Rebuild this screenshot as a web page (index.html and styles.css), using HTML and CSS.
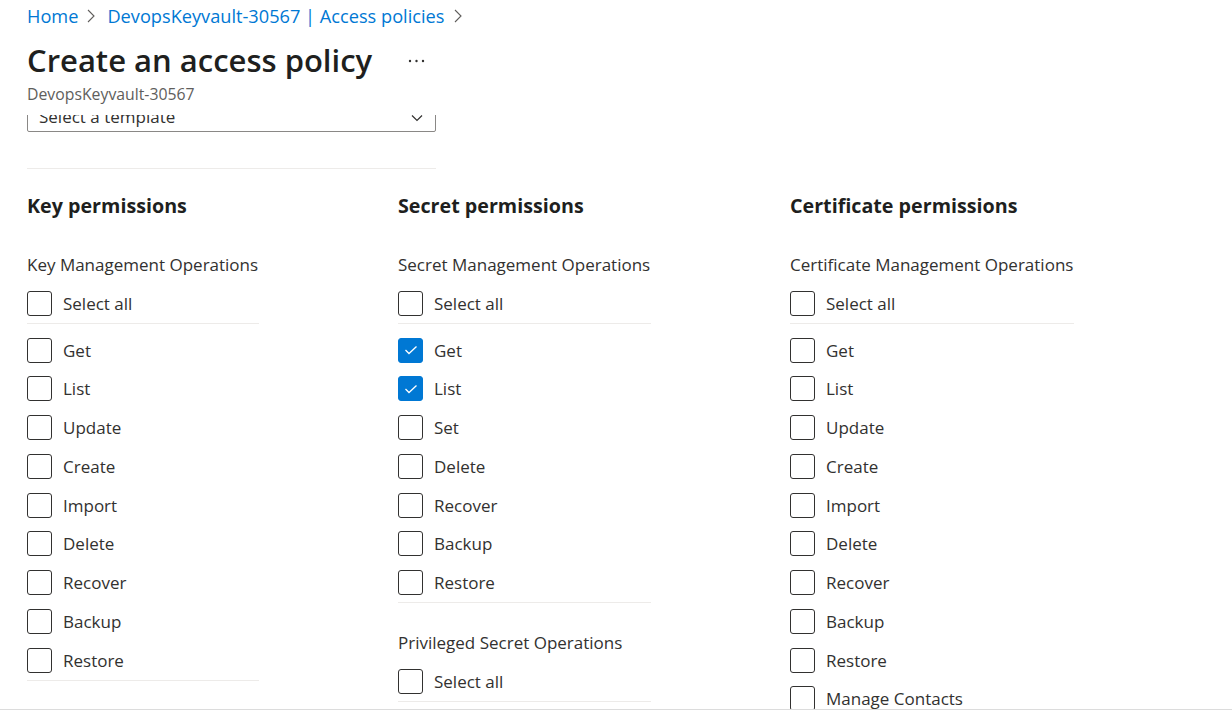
FILE: index.html
```html
<!DOCTYPE html>
<html lang="en">
<head>
<meta charset="utf-8">
<title>Create an access policy</title>
<link rel="stylesheet" href="styles.css">
</head>
<body>
<div class="page">
  <header class="header">
    <nav class="breadcrumb">
      <a class="crumb">Home</a>
      <svg class="chev" width="10" height="14" viewBox="0 0 10 14"><polyline points="2,1 8,7 2,13" fill="none" stroke="#605e5c" stroke-width="1.1"/></svg>
      <a class="crumb">DevopsKeyvault-30567 | Access policies</a>
      <svg class="chev last" width="10" height="14" viewBox="0 0 10 14"><polyline points="2,1 8,7 2,13" fill="none" stroke="#605e5c" stroke-width="1.1"/></svg>
    </nav>
    <div class="title-row">
      <h1 class="title">Create an access policy</h1>
      <svg class="more" width="18" height="4" viewBox="0 0 18 4"><circle cx="2" cy="2" r="1.2" fill="#323130"/><circle cx="8.5" cy="2" r="1.2" fill="#323130"/><circle cx="15" cy="2" r="1.2" fill="#323130"/></svg>
    </div>
    <div class="subtitle">DevopsKeyvault-30567</div>
  </header>

  <main class="scroll">
    <div class="content">
      <div class="select">
        <span class="select-text">Select a template</span>
        <svg class="select-chev" width="12" height="8" viewBox="0 0 12 8"><polyline points="1,1.5 6,6.5 11,1.5" fill="none" stroke="#323130" stroke-width="1.2"/></svg>
      </div>
      <div class="divider"></div>

      <div class="columns">
        <section class="col">
          <h2 class="col-title">Key permissions</h2>
          <div class="group">
            <div class="group-label">Key Management Operations</div>
            <label class="row all"><span class="box"></span><span>Select all</span></label>
            <div class="items">
              <label class="row"><span class="box"></span><span>Get</span></label>
              <label class="row"><span class="box"></span><span>List</span></label>
              <label class="row"><span class="box"></span><span>Update</span></label>
              <label class="row"><span class="box"></span><span>Create</span></label>
              <label class="row"><span class="box"></span><span>Import</span></label>
              <label class="row"><span class="box"></span><span>Delete</span></label>
              <label class="row"><span class="box"></span><span>Recover</span></label>
              <label class="row"><span class="box"></span><span>Backup</span></label>
              <label class="row"><span class="box"></span><span>Restore</span></label>
            </div>
          </div>
        </section>

        <section class="col">
          <h2 class="col-title">Secret permissions</h2>
          <div class="group">
            <div class="group-label">Secret Management Operations</div>
            <label class="row all"><span class="box"></span><span>Select all</span></label>
            <div class="items">
              <label class="row"><span class="box checked"><svg width="14" height="10" viewBox="0 0 14 10"><polyline points="1.5,5 5,8.5 12.5,1.5" fill="none" stroke="#fff" stroke-width="1.3"/></svg></span><span>Get</span></label>
              <label class="row"><span class="box checked"><svg width="14" height="10" viewBox="0 0 14 10"><polyline points="1.5,5 5,8.5 12.5,1.5" fill="none" stroke="#fff" stroke-width="1.3"/></svg></span><span>List</span></label>
              <label class="row"><span class="box"></span><span>Set</span></label>
              <label class="row"><span class="box"></span><span>Delete</span></label>
              <label class="row"><span class="box"></span><span>Recover</span></label>
              <label class="row"><span class="box"></span><span>Backup</span></label>
              <label class="row"><span class="box"></span><span>Restore</span></label>
            </div>
          </div>
          <div class="group">
            <div class="group-label">Privileged Secret Operations</div>
            <label class="row all"><span class="box"></span><span>Select all</span></label>
          </div>
        </section>

        <section class="col">
          <h2 class="col-title">Certificate permissions</h2>
          <div class="group">
            <div class="group-label">Certificate Management Operations</div>
            <label class="row all"><span class="box"></span><span>Select all</span></label>
            <div class="items">
              <label class="row"><span class="box"></span><span>Get</span></label>
              <label class="row"><span class="box"></span><span>List</span></label>
              <label class="row"><span class="box"></span><span>Update</span></label>
              <label class="row"><span class="box"></span><span>Create</span></label>
              <label class="row"><span class="box"></span><span>Import</span></label>
              <label class="row"><span class="box"></span><span>Delete</span></label>
              <label class="row"><span class="box"></span><span>Recover</span></label>
              <label class="row"><span class="box"></span><span>Backup</span></label>
              <label class="row"><span class="box"></span><span>Restore</span></label>
              <label class="row"><span class="box"></span><span>Manage Contacts</span></label>
            </div>
          </div>
        </section>
      </div>
    </div>
  </main>
</div>
</body>
</html>
```

FILE: styles.css
```css
* { box-sizing: border-box; }

html, body {
  margin: 0;
  padding: 0;
  background: #ffffff;
}

body {
  font-family: "Segoe UI", "Open Sans", "Noto Sans", sans-serif;
  color: #323130;
  overflow: hidden;
}

.page {
  width: 1232px;
  height: 721px;
  display: flex;
  flex-direction: column;
}

.header {
  height: 115px;
  padding-left: 27px;
  flex: none;
}

.breadcrumb {
  height: 31px;
  display: flex;
  align-items: center;
  font-size: 18.2px;
}

.crumb {
  color: #0078d4;
  text-decoration: none;
  white-space: nowrap;
}

.chev {
  margin: 1px 11px 0 8px;
  flex: none;
}

.chev.last {
  margin-left: 9px;
}

.title-row {
  height: 40px;
  margin-top: 9px;
  display: flex;
  align-items: center;
}

.title {
  margin: 0;
  font-size: 31px;
  font-weight: 600;
  line-height: 40px;
  color: #201f1e;
  white-space: nowrap;
}

.more {
  margin-left: 36px;
  margin-top: 2px;
}

.subtitle {
  margin-top: 4px;
  font-size: 15.8px;
  line-height: 20px;
  color: #605e5c;
}

.scroll {
  height: 595px;
  flex: none;
  overflow: hidden;
  border-bottom: 1px solid #dcdcdc;
}

.content {
  margin-top: -15px;
  padding-left: 27px;
}

.select {
  width: 409px;
  height: 32px;
  border: 1px solid #8a8886;
  border-radius: 2px;
  display: flex;
  align-items: center;
  justify-content: space-between;
  padding: 0 12px 0 11px;
  font-size: 17px;
  color: #323130;
}

.select-chev {
  margin-top: 4px;
}

.divider {
  width: 409px;
  height: 1px;
  background: #edebe9;
  margin-top: 36px;
}

.columns {
  display: grid;
  grid-template-columns: 232px 253px 284px;
  column-gap: 139px;
  align-items: start;
}

.col-title {
  margin: 23px 0 0;
  font-size: 19.7px;
  font-weight: 700;
  line-height: 28px;
  color: #201f1e;
  white-space: nowrap;
}

.group {
  margin-top: 21px;
}

.col-title + .group {
  margin-top: 26px;
}

.group-label {
  font-size: 17px;
  line-height: 38px;
  height: 38px;
  white-space: nowrap;
}

.row {
  display: flex;
  align-items: center;
  height: 38.75px;
  gap: 11px;
  font-size: 17px;
  white-space: nowrap;
}

.row.all {
  border-bottom: 1px solid #edebe9;
  height: 39.75px;
}

.items {
  padding-top: 7px;
  border-bottom: 1px solid #edebe9;
}

.box {
  width: 25px;
  height: 25px;
  flex: none;
  border: 1px solid #323130;
  border-radius: 3px;
  display: flex;
  align-items: center;
  justify-content: center;
}

.box.checked {
  background: #0078d4;
  border-color: #0078d4;
}
```
